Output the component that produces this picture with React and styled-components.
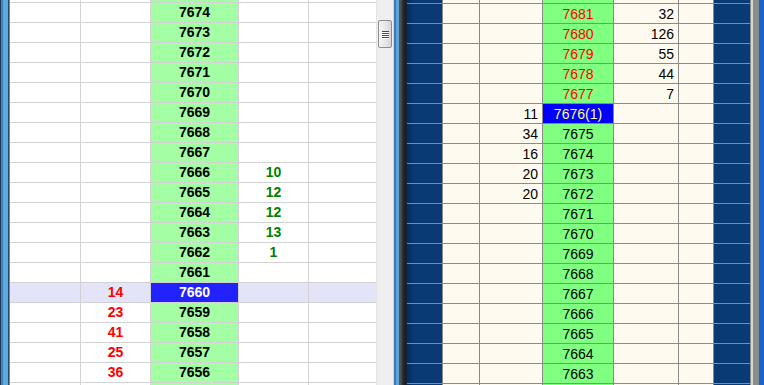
import React from "react";
import styled, { createGlobalStyle } from "styled-components";

const Global = createGlobalStyle`
  html, body { margin: 0; padding: 0; background: #fff; overflow: hidden; }
  body { width: 764px; height: 385px; }
`;

const Page = styled.div`
  display: flex;
  width: 764px;
  height: 385px;
  overflow: hidden;
`;

const LeftFrame = styled.div`
  flex: 0 0 10px;
  background: linear-gradient(90deg, #1c3a58 0, #1c3a58 1px, #3e82bc 1px, #3e82bc 3px, #5eaadc 3px, #5eaadc 8px, #24486e 8px, #24486e 9px, #7a8896 9px);
`;

const Viewport = styled.div`
  flex: 0 0 ${(p) => p.$w}px;
  overflow: hidden;
  background: ${(p) => p.$bg};
`;

const Rows = styled.div`
  margin-top: ${(p) => p.$offset}px;
`;

const LeftRow = styled.div`
  display: grid;
  grid-template-columns: 71px 70px 88px 70px 67px;
  height: 20px;
  box-sizing: border-box;
  border-bottom: 1px solid #d2d2d2;
  background: ${(p) => (p.$sel ? "#e4e4f8" : "#ffffff")};
  font-family: "Liberation Sans", Arial, sans-serif;
  font-weight: bold;
  font-size: 14px;
`;

const LCell = styled.div`
  border-right: ${(p) => (p.$last ? "none" : "1px solid #d2d2d2")};
  display: flex;
  align-items: center;
  justify-content: center;
  line-height: 19px;
  color: ${(p) => p.$color || "#000"};
  background: ${(p) => p.$bg || "transparent"};
`;

const Scrollbar = styled.div`
  flex: 0 0 17px;
  box-sizing: border-box;
  background: #efefef;
  border-left: 1px solid #e4e4e4;
  display: flex;
  flex-direction: column;
  padding-top: 20px;
  padding-left: 1px;
`;

const Thumb = styled.div`
  width: 14px;
  height: 28px;
  box-sizing: border-box;
  border: 1px solid #8c8c8c;
  border-radius: 2px;
  background: linear-gradient(90deg, #f6f6f6 0%, #e8e8e8 50%, #d6d6d6 100%);
  display: flex;
  flex-direction: column;
  align-items: center;
  justify-content: center;
  gap: 1px;
`;

const Grip = styled.div`
  width: 7px;
  height: 1px;
  background: #4a4a4a;
  box-shadow: 0 1px 0 #ffffff;
`;

const Divider = styled.div`
  flex: 0 0 14px;
  background: linear-gradient(90deg, #c8d6e4 0, #c8d6e4 1px, #3c7ab8 1px, #3c7ab8 3px, #5ea2d8 3px, #5ea2d8 6px, #2a5a8a 6px, #2a5a8a 7px, #5a5a5a 7px, #2a2a2a 10px, #141c26 13px, #10233e 14px);
`;

const RightRow = styled.div`
  display: grid;
  grid-template-columns: 36px 37px 63px 71px 65px 35px 37px;
  height: 20px;
  box-sizing: border-box;
  border-bottom: 1px solid #8a8a8a;
  font-family: "Liberation Sans", Arial, sans-serif;
  font-size: 14px;
`;

const RCell = styled.div`
  border-right: 1px solid #8a8a8a;
  display: flex;
  align-items: center;
  justify-content: ${(p) => p.$align || "center"};
  padding-right: ${(p) => (p.$align === "flex-end" ? "4px" : "0")};
  padding-top: 1px;
  line-height: 18px;
  color: ${(p) => p.$color || "#000"};
  background: ${(p) => p.$bg};
`;

const RightFrame = styled.div`
  flex: 0 0 13px;
  background: linear-gradient(90deg, #d6d6d6 0, #d6d6d6 2px, #8c8c8c 2px, #8c8c8c 8px, #1764cc 8px);
`;

const NAVY = "#0a3a74";
const NAVY_EDGE = "linear-gradient(90deg, #062a58 0, #0a3a74 7px)";
const CREAM = "#fffaf0";
const RGREEN = "#80ff80";
const LGREEN = "#a4ffa4";

const leftBids = { 7660: 14, 7659: 23, 7658: 41, 7657: 25, 7656: 36 };
const leftAsks = { 7666: 10, 7665: 12, 7664: 12, 7663: 13, 7662: 1 };

const leftPrices = [];
for (let p = 7675; p >= 7655; p--) leftPrices.push(p);
const leftEdge = (p) => p === 7675 || p === 7655;

const rightAsks = { 7681: 32, 7680: 126, 7679: 55, 7678: 44, 7677: 7 };
const rightBids = { 7676: 11, 7675: 34, 7674: 16, 7673: 20, 7672: 20 };
const rightPrices = [];
for (let p = 7682; p >= 7662; p--) rightPrices.push(p);
const rightEdge = (p) => p === 7682 || p === 7662;

export default function App() {
  return (
    <>
      <Global />
      <Page>
        <LeftFrame />
        <Viewport $w={366} $bg="#fff">
          <Rows $offset={-17}>
            {leftPrices.map((p) => {
              const sel = p === 7660;
              return (
                <LeftRow key={p} $sel={sel}>
                  <LCell />
                  <LCell $color="#ff0000">{leftBids[p] ?? ""}</LCell>
                  <LCell $bg={sel ? "#2222ff" : LGREEN} $color={sel ? "#ffffff" : "#000"}>
                    {leftEdge(p) ? "" : p}
                  </LCell>
                  <LCell $color="#008000">{leftAsks[p] ?? ""}</LCell>
                  <LCell $last />
                </LeftRow>
              );
            })}
          </Rows>
        </Viewport>
        <Scrollbar>
          <Thumb>
            <Grip />
            <Grip />
            <Grip />
            <Grip />
          </Thumb>
        </Scrollbar>
        <Divider />
        <Viewport $w={344} $bg={CREAM}>
          <Rows $offset={-16}>
            {rightPrices.map((p) => {
              const sel = p === 7676;
              const isAsk = p > 7676;
              return (
                <RightRow key={p}>
                  <RCell $bg={NAVY_EDGE} />
                  <RCell $bg={CREAM} />
                  <RCell $bg={CREAM} $align="flex-end">{rightBids[p] ?? ""}</RCell>
                  <RCell
                    $bg={sel ? "#0000ff" : RGREEN}
                    $color={sel ? "#ffff80" : isAsk ? "#ff0000" : "#000"}
                  >
                    {rightEdge(p) ? "" : sel ? `${p}(1)` : p}
                  </RCell>
                  <RCell $bg={CREAM} $align="flex-end">{rightAsks[p] ?? ""}</RCell>
                  <RCell $bg={CREAM} />
                  <RCell $bg={NAVY} />
                </RightRow>
              );
            })}
          </Rows>
        </Viewport>
        <RightFrame />
      </Page>
    </>
  );
}
